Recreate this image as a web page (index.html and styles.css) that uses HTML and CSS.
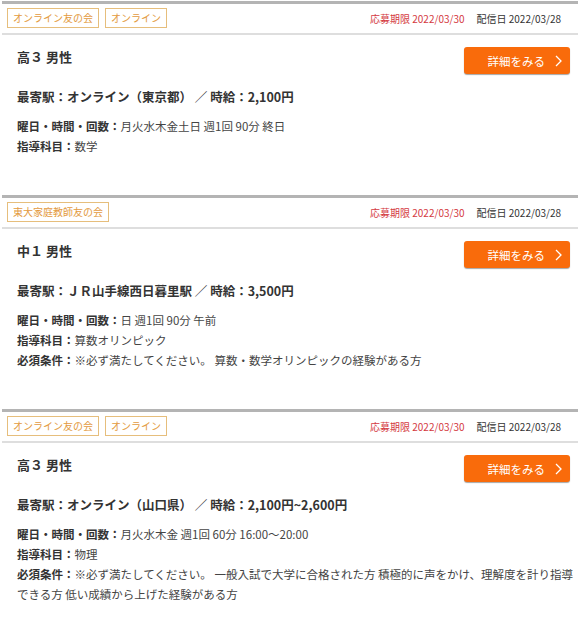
FILE: index.html
```html
<!DOCTYPE html>
<html lang="ja">
<head>
    <meta charset="UTF-8">
    <meta name="viewport" content="width=device-width, initial-scale=1.0">
    <title>求人一覧</title>
    <link rel="stylesheet" href="styles.css">
</head>
<body>
    <div class="list">

        <div class="job">
            <div class="job-head">
                <div class="tags">
                    <span class="tag">オンライン友の会</span>
                    <span class="tag">オンライン</span>
                </div>
                <div class="dates">
                    <span class="deadline">応募期限 2022/03/30</span>
                    <span class="posted">配信日 2022/03/28</span>
                </div>
            </div>
            <div class="job-body">
                <div class="title-row">
                    <h2 class="job-title">高３ 男性</h2>
                    <a href="#" class="detail-btn">詳細をみる
                        <svg width="7" height="12" viewBox="0 0 7 12"><polyline points="1,1 6,6 1,11" fill="none" stroke="#fff" stroke-width="1.3"/></svg>
                    </a>
                </div>
                <p class="station">最寄駅：オンライン（東京都） ／ 時給：2,100円</p>
                <div class="info">
                    <p><b>曜日・時間・回数：</b>月火水木金土日 週1回 90分 終日</p>
                    <p><b>指導科目：</b>数学</p>
                </div>
            </div>
        </div>

        <div class="job">
            <div class="job-head">
                <div class="tags">
                    <span class="tag">東大家庭教師友の会</span>
                </div>
                <div class="dates">
                    <span class="deadline">応募期限 2022/03/30</span>
                    <span class="posted">配信日 2022/03/28</span>
                </div>
            </div>
            <div class="job-body">
                <div class="title-row">
                    <h2 class="job-title">中１ 男性</h2>
                    <a href="#" class="detail-btn">詳細をみる
                        <svg width="7" height="12" viewBox="0 0 7 12"><polyline points="1,1 6,6 1,11" fill="none" stroke="#fff" stroke-width="1.3"/></svg>
                    </a>
                </div>
                <p class="station">最寄駅：ＪＲ山手線西日暮里駅 ／ 時給：3,500円</p>
                <div class="info">
                    <p><b>曜日・時間・回数：</b>日 週1回 90分 午前</p>
                    <p><b>指導科目：</b>算数オリンピック</p>
                    <p><b>必須条件：</b>※必ず満たしてください。 算数・数学オリンピックの経験がある方</p>
                </div>
            </div>
        </div>

        <div class="job">
            <div class="job-head">
                <div class="tags">
                    <span class="tag">オンライン友の会</span>
                    <span class="tag">オンライン</span>
                </div>
                <div class="dates">
                    <span class="deadline">応募期限 2022/03/30</span>
                    <span class="posted">配信日 2022/03/28</span>
                </div>
            </div>
            <div class="job-body">
                <div class="title-row">
                    <h2 class="job-title">高３ 男性</h2>
                    <a href="#" class="detail-btn">詳細をみる
                        <svg width="7" height="12" viewBox="0 0 7 12"><polyline points="1,1 6,6 1,11" fill="none" stroke="#fff" stroke-width="1.3"/></svg>
                    </a>
                </div>
                <p class="station">最寄駅：オンライン（山口県） ／ 時給：2,100円~2,600円</p>
                <div class="info">
                    <p><b>曜日・時間・回数：</b>月火水木金 週1回 60分 16:00～20:00</p>
                    <p><b>指導科目：</b>物理</p>
                    <p><b>必須条件：</b>※必ず満たしてください。 一般入試で大学に合格された方 積極的に声をかけ、理解度を計り指導できる方 低い成績から上げた経験がある方</p>
                </div>
            </div>
        </div>

    </div>
</body>
</html>
```

FILE: styles.css
```css
body {
    margin: 0;
    padding: 0;
    background: #fff;
    font-family: "Noto Sans CJK JP", "Noto Sans", sans-serif;
    color: #333;
}
.list {
    padding: 1px 3px 0 2px;
}
.job {
    border-top: 3px solid #b4b4b4;
}
.job-head {
    display: flex;
    justify-content: space-between;
    align-items: center;
    padding: 4px 17px 5px 5px;
    border-bottom: 2px solid #dedede;
}
.tags {
    display: flex;
    gap: 6px;
}
.tag {
    display: inline-block;
    height: 18px;
    line-height: 18px;
    padding: 0 5px;
    font-size: 10px;
    color: #e39a3e;
    border: 1px solid #e6be7c;
}
.dates {
    display: flex;
    gap: 12px;
    font-size: 10px;
}
.deadline {
    color: #d43a3f;
}
.posted {
    color: #333;
}
.job-body {
    padding: 12px 4px 39px 15px;
}
.title-row {
    display: flex;
    justify-content: space-between;
    align-items: flex-start;
}
.job-title {
    margin: 0;
    font-size: 13px;
    line-height: 20px;
    font-weight: bold;
    color: #333;
}
.detail-btn {
    display: flex;
    align-items: center;
    height: 27px;
    margin-right: 4px;
    padding: 0 8px 0 24px;
    gap: 10px;
    background: #f96b0b;
    color: #fff;
    font-size: 11.5px;
    text-decoration: none;
    border-radius: 3px;
    box-shadow: 0 1px 1px rgba(0, 0, 0, 0.35);
}
.station {
    margin: 13px 0 0;
    font-size: 12.5px;
    line-height: 20px;
    font-weight: bold;
    color: #333;
}
.info {
    margin-top: 9px;
}
.info p {
    margin: 0;
    font-size: 11.5px;
    line-height: 20px;
    color: #444;
}
.info b {
    color: #333;
}
```
